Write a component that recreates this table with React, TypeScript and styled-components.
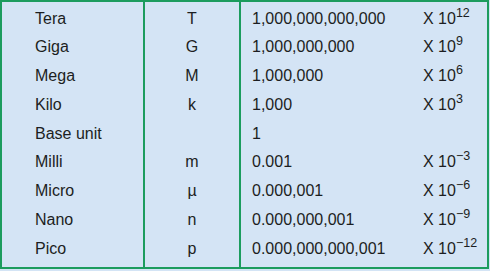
import React from "react";
import styled, { createGlobalStyle } from "styled-components";

const GlobalStyle = createGlobalStyle`
  html, body {
    margin: 0;
    padding: 0;
    background: #d4e4f5;
  }
  body {
    font-family: "Liberation Sans", Arial, sans-serif;
  }
`;

interface Prefix {
  name: string;
  symbol: string;
  value: string;
  exponent?: string;
}

const PREFIXES: Prefix[] = [
  { name: "Tera", symbol: "T", value: "1,000,000,000,000", exponent: "12" },
  { name: "Giga", symbol: "G", value: "1,000,000,000", exponent: "9" },
  { name: "Mega", symbol: "M", value: "1,000,000", exponent: "6" },
  { name: "Kilo", symbol: "k", value: "1,000", exponent: "3" },
  { name: "Base unit", symbol: "", value: "1" },
  { name: "Milli", symbol: "m", value: "0.001", exponent: "\u22123" },
  { name: "Micro", symbol: "\u00b5", value: "0.000,001", exponent: "\u22126" },
  { name: "Nano", symbol: "n", value: "0.000,000,001", exponent: "\u22129" },
  { name: "Pico", symbol: "p", value: "0.000,000,000,001", exponent: "\u221212" },
];

const GREEN = "#1c9c5e";

const Table = styled.div`
  display: grid;
  grid-template-columns: 143px 96px 178px 1fr;
  grid-template-rows: 31px repeat(7, 28.75px) 1fr;
  box-sizing: border-box;
  width: 489px;
  height: 269px;
  border: 2px solid ${GREEN};
  background: #d4e4f5;
  color: #1c1e22;
  font-size: 16px;
`;

const Cell = styled.div<{ $divider?: boolean; $center?: boolean; $pad?: number; $first?: boolean; $last?: boolean }>`
  display: flex;
  align-items: center;
  justify-content: ${(p) => (p.$center ? "center" : "flex-start")};
  white-space: nowrap;
  padding-left: ${(p) => p.$pad ?? 0}px;
  padding-top: ${(p) => (p.$first ? "2.25px" : "0")};
  padding-bottom: ${(p) => (p.$last ? "3.75px" : "0")};
  border-right: ${(p) => (p.$divider ? `2px solid ${GREEN}` : "none")};
  line-height: 20px;
`;

const Sup = styled.sup`
  font-size: 12.5px;
  vertical-align: 7px;
  line-height: 0;
`;

export default function App() {
  return (
    <>
      <GlobalStyle />
      <Table>
        {PREFIXES.map((p, i) => {
          const edge = { $first: i === 0, $last: i === PREFIXES.length - 1 };
          return (
            <React.Fragment key={p.name}>
              <Cell {...edge} $divider $pad={33}>
                {p.name}
              </Cell>
              <Cell {...edge} $divider $center>
                {p.symbol}
              </Cell>
              <Cell {...edge} $pad={11}>
                {p.value}
              </Cell>
              <Cell {...edge} $pad={4}>
                {p.exponent && (
                  <span>
                    X 10<Sup>{p.exponent}</Sup>
                  </span>
                )}
              </Cell>
            </React.Fragment>
          );
        })}
      </Table>
    </>
  );
}
